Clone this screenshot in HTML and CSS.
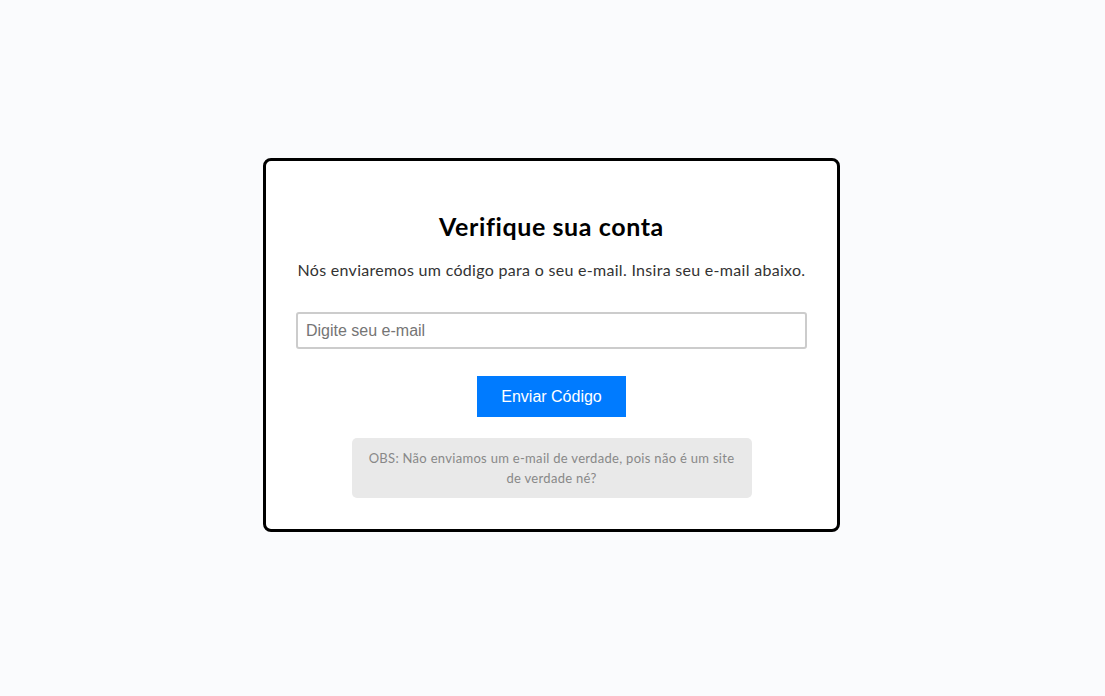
FILE: index.html
```html
<!DOCTYPE html>
<html lang="pt-BR">
<head>
<meta charset="utf-8">
<title>Verifique sua conta</title>
<link rel="stylesheet" href="styles.css">
</head>
<body>
<main class="page">
  <section class="card">
    <h2 class="title">Verifique sua conta</h2>
    <p class="subtitle">Nós enviaremos um código para o seu e-mail. Insira seu e-mail abaixo.</p>
    <input class="email" type="email" placeholder="Digite seu e-mail">
    <button class="send" type="button">Enviar Código</button>
    <p class="note">OBS: Não enviamos um e-mail de verdade, pois não é um site de verdade né?</p>
  </section>
</main>
</body>
</html>
```

FILE: styles.css
```css
html, body {
  margin: 0;
  padding: 0;
  background: #fafbfd;
}
body {
  font-family: "Lato", "Noto Sans", sans-serif;
}
.page {
  height: 696px;
  display: flex;
  align-items: flex-start;
  justify-content: center;
  padding: 158px 2px 0 0;
  box-sizing: border-box;
}
.card {
  width: 577px;
  box-sizing: border-box;
  border: 3px solid #000;
  border-radius: 8px;
  background: #fff;
  padding: 50px 30px 31px;
  display: flex;
  flex-direction: column;
  align-items: center;
}
.title {
  margin: 0;
  font-size: 25px;
  line-height: 30px;
  font-weight: 700;
  letter-spacing: 0.6px;
  color: #000;
}
.subtitle {
  margin: 19px 0 0;
  font-size: 16px;
  line-height: 20px;
  letter-spacing: 0.3px;
  white-space: nowrap;
  color: #333;
  text-align: center;
}
.email {
  margin-top: 32px;
  width: 100%;
  height: 37px;
  box-sizing: border-box;
  border: 2px solid #ccc;
  border-radius: 3px;
  padding: 0 8px;
  font-family: "Liberation Sans", Arial, sans-serif;
  font-size: 16px;
  color: #333;
  background: #fff;
  outline: none;
}
.email::placeholder {
  color: #757575;
}
.send {
  margin-top: 27px;
  width: 149px;
  height: 41px;
  border: none;
  background: #007bff;
  color: #fff;
  font-family: "Liberation Sans", Arial, sans-serif;
  font-size: 16px;
  padding: 0;
  cursor: pointer;
}
.note {
  margin: 21px 0 0;
  width: 400px;
  box-sizing: border-box;
  background: #e9e9e9;
  border-radius: 5px;
  padding: 10px 12px 10px;
  font-size: 13px;
  line-height: 20px;
  letter-spacing: 0.3px;
  color: #888;
  text-align: center;
}
```
